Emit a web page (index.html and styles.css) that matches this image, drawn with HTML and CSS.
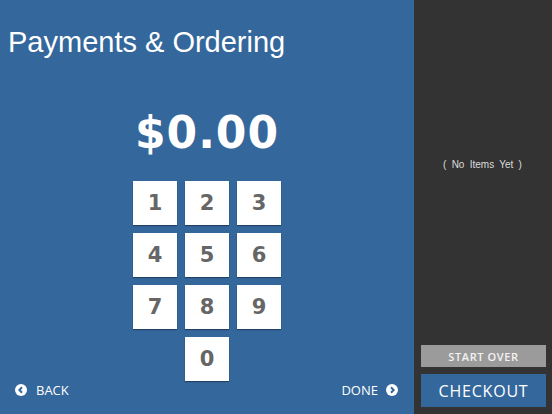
FILE: index.html
```html
<!DOCTYPE html>
<html lang="en">
<head>
<meta charset="utf-8">
<title>Payments &amp; Ordering</title>
<link rel="stylesheet" href="styles.css">
</head>
<body>
<div class="app">
  <main class="pay">
    <h1 class="title">Payments &amp; Ordering</h1>
    <div class="amount">$0.00</div>
    <div class="keypad">
      <button class="key">1</button>
      <button class="key">2</button>
      <button class="key">3</button>
      <button class="key">4</button>
      <button class="key">5</button>
      <button class="key">6</button>
      <button class="key">7</button>
      <button class="key">8</button>
      <button class="key">9</button>
      <button class="key key-zero">0</button>
    </div>
    <div class="footer">
      <a class="nav back">
        <svg class="nav-icon" viewBox="0 0 12 12" width="12" height="12"><circle cx="6" cy="6" r="6" fill="#fff"/><path d="M7 3.3 L4.4 6 L7 8.7" fill="none" stroke="#34679b" stroke-width="2"/></svg>
        <span>BACK</span>
      </a>
      <a class="nav done">
        <span>DONE</span>
        <svg class="nav-icon" viewBox="0 0 12 12" width="12" height="12"><circle cx="6" cy="6" r="6" fill="#fff"/><path d="M5 3.3 L7.6 6 L5 8.7" fill="none" stroke="#34679b" stroke-width="2"/></svg>
      </a>
    </div>
  </main>
  <aside class="cart">
    <div class="items">( No Items Yet )</div>
    <button class="btn start-over">START OVER</button>
    <button class="btn checkout">CHECKOUT</button>
  </aside>
</div>
</body>
</html>
```
FILE: styles.css
```css
html, body {
  margin: 0;
  padding: 0;
}
body {
  width: 552px;
  height: 414px;
  overflow: hidden;
  font-family: "Liberation Sans", Arial, sans-serif;
}
.app {
  display: flex;
  width: 552px;
  height: 414px;
}
.pay {
  width: 414px;
  background: #34679b;
  display: flex;
  flex-direction: column;
  color: #fff;
}
.title {
  margin: 0;
  padding: 24px 0 0 8px;
  font-family: "Liberation Sans", Arial, sans-serif;
  font-weight: normal;
  font-size: 29px;
  line-height: 36px;
  color: #fff;
}
.amount {
  margin-top: 48px;
  text-align: center;
  font-family: "DejaVu Sans", sans-serif;
  font-weight: bold;
  font-size: 44px;
  line-height: 50px;
  letter-spacing: 1px;
  color: #fff;
}
.keypad {
  margin: 23px auto 0;
  display: grid;
  grid-template-columns: repeat(3, 44px);
  grid-auto-rows: 44px;
  gap: 8px;
}
.key {
  border: 0;
  padding: 0;
  margin: 0;
  background: #fff;
  box-shadow: 0 1px 1px rgba(0, 0, 0, 0.35);
  font-family: "DejaVu Sans", sans-serif;
  font-weight: bold;
  font-size: 21px;
  color: #666;
}
.key-zero {
  grid-column: 2;
}
.footer {
  margin-top: auto;
  margin-bottom: 15px;
  height: 18px;
  padding: 0 16px 0 15px;
  display: flex;
  justify-content: space-between;
  align-items: center;
}
.nav {
  display: flex;
  align-items: center;
  gap: 8px;
  font-family: "Open Sans", sans-serif;
  font-size: 13px;
  color: #fff;
}
.back {
  gap: 9px;
}
.nav-icon {
  display: block;
}
.cart {
  width: 138px;
  box-sizing: border-box;
  background: #333;
  padding: 0 6px 7px 7px;
  display: flex;
  flex-direction: column;
}
.items {
  flex: 1;
  display: flex;
  align-items: center;
  justify-content: center;
  padding-bottom: 16px;
  padding-right: 2px;
  font-family: "Liberation Sans", Arial, sans-serif;
  font-size: 10px;
  word-spacing: 2.5px;
  color: #ddd;
}
.btn {
  border: 0;
  margin: 0;
  padding: 0;
  width: 125px;
  color: #fff;
  font-family: "Open Sans", sans-serif;
}
.start-over {
  height: 22px;
  background: #9b9b9b;
  font-size: 11px;
  font-weight: 600;
  letter-spacing: 0.6px;
  color: #f2f2f2;
}
.checkout {
  margin-top: 7px;
  height: 33px;
  background: #34679b;
  font-size: 16px;
  letter-spacing: 0.8px;
}
```
